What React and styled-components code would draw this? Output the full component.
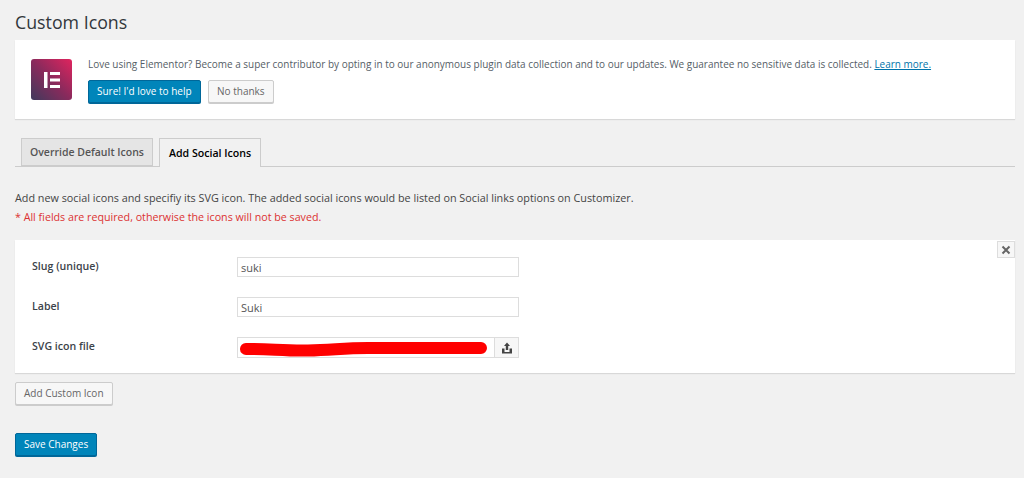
import styled, { createGlobalStyle } from "styled-components"

const Global = createGlobalStyle`
  html, body {
    margin: 0;
    background: #f1f1f1;
  }
  body {
    font-family: "Open Sans", "Noto Sans", sans-serif;
    font-size: 11.5px;
    color: #444;
  }
  * { box-sizing: border-box; }
`

const Wrap = styled.div`
  width: 1024px;
  height: 478px;
  padding: 12px 9px 0 15px;
  overflow: hidden;
`

const Title = styled.h1`
  margin: 0;
  height: 28px;
  font-size: 17.8px;
  line-height: 20px;
  font-weight: 400;
  color: #32373c;
`

const Notice = styled.div`
  display: flex;
  gap: 16px;
  height: 79px;
  padding: 16px 16px 0;
  background: #fff;
  box-shadow: 0 1px 1px rgba(0, 0, 0, 0.1);
`

const Logo = styled.div`
  flex: none;
  width: 41px;
  height: 41px;
  margin-top: 3px;
  border-radius: 3px;
  background: linear-gradient(45deg, #3f3a5c 0%, #8a2a5c 50%, #e0245e 100%);
  display: flex;
  align-items: center;
  justify-content: center;
  svg { display: block; }
`

const NoticeBody = styled.div`
  display: flex;
  flex-direction: column;
  gap: 7px;
`

const NoticeText = styled.p`
  margin: 0;
  height: 17px;
  line-height: 17px;
  font-size: 9.97px;
  color: #555d66;
  white-space: nowrap;

  a { color: #0073aa; text-decoration: underline; }
`

const Actions = styled.div`
  display: flex;
  gap: 7px;
`

const Button = styled.button`
  height: 23px;
  padding: 0 ${p => p.$pad || 8}px 1px;
  border-radius: 2px;
  font-family: inherit;
  font-size: 10px;
  white-space: nowrap;
  border: 1px solid ${p => (p.$primary ? "#006799" : "#ccc")};
  background: ${p => (p.$primary ? "#0085ba" : "#f7f7f7")};
  color: ${p => (p.$primary ? "#fff" : "#666")};
  box-shadow: 0 1px 0 ${p => (p.$primary ? "#006799" : "#ccc")};
`

const Tabs = styled.div`
  display: flex;
  gap: 6px;
  height: 29px;
  margin-top: 19px;
  padding-left: 6px;
  border-bottom: 1px solid #ccc;
`

const Tab = styled.div`
  height: ${p => (p.$active ? 29 : 28)}px;
  padding: 0 ${p => (p.$active ? 9 : 8)}px;
  display: flex;
  align-items: center;
  font-size: ${p => (p.$active ? 10.6 : 10.5)}px;
  font-weight: 600;
  white-space: nowrap;
  border: 1px solid #ccc;
  border-bottom: ${p => (p.$active ? "none" : "1px solid #ccc")};
  background: ${p => (p.$active ? "#f1f1f1" : "#e5e5e5")};
  color: ${p => (p.$active ? "#000" : "#555")};
`

const Intro = styled.p`
  margin: 22px 0 0;
  height: 20px;
  line-height: 17px;
  font-size: 10.8px;
  color: #444;
`

const Required = styled.p`
  margin: 0;
  height: 31px;
  line-height: 17px;
  font-size: 10.7px;
  color: #dc3232;
`

const Card = styled.div`
  position: relative;
  height: 133px;
  padding: 17px;
  background: #fff;
  box-shadow: 0 1px 1px rgba(0, 0, 0, 0.1);
  display: flex;
  flex-direction: column;
  gap: 20px;
`

const Close = styled.button`
  position: absolute;
  top: 1px;
  right: 0;
  width: 18px;
  height: 17px;
  padding: 0;
  display: flex;
  align-items: center;
  justify-content: center;
  background: #f7f7f7;
  border: 1px solid #ddd;
`

const Row = styled.div`
  display: flex;
  height: 20px;
`

const Label = styled.label`
  width: 205px;
  flex: none;
  font-size: 10.6px;
  font-weight: 600;
  line-height: 18px;
  color: #3c434a;
`

const Input = styled.div`
  width: 282px;
  height: ${p => (p.$tall ? 21 : 20)}px;
  padding-left: 3px;
  display: flex;
  align-items: center;
  font-size: 11px;
  color: #555;
  background: #fff;
  border: 1px solid #ddd;
`

const FileInput = styled(Input)`
  padding: 0;
`

const Scribble = styled.svg`
  flex: none;
  display: block;
  width: 256px;
  height: 19px;
`

const Upload = styled.div`
  margin-left: auto;
  width: 25px;
  height: 100%;
  display: flex;
  align-items: center;
  justify-content: center;
  background: #f7f7f7;
  border-left: 1px solid #ddd;
`

const AddRow = styled.div`
  margin-top: 9px;
  height: 51px;
`

const Elementor = () => (
  <svg width="18" height="18" viewBox="0 0 18 18">
    <rect x="1" y="1" width="3.5" height="16" fill="#fff" />
    <rect x="7" y="1" width="10" height="3" fill="#fff" />
    <rect x="7" y="7.5" width="10" height="3" fill="#fff" />
    <rect x="7" y="14" width="10" height="3" fill="#fff" />
  </svg>
)

const App = () => {
  return (
    <Wrap>
      <Global />
      <Title>Custom Icons</Title>

      <Notice>
        <Logo><Elementor /></Logo>
        <NoticeBody>
          <NoticeText>
            Love using Elementor? Become a super contributor by opting in to our anonymous plugin data collection and to our updates. We guarantee no sensitive data is collected. <a href="#more">Learn more.</a>
          </NoticeText>
          <Actions>
            <Button $primary>Sure! I'd love to help</Button>
            <Button $pad={8.5}>No thanks</Button>
          </Actions>
        </NoticeBody>
      </Notice>

      <Tabs>
        <Tab>Override Default Icons</Tab>
        <Tab $active>Add Social Icons</Tab>
      </Tabs>

      <Intro>Add new social icons and specifiy its SVG icon. The added social icons would be listed on Social links options on Customizer.</Intro>
      <Required>* All fields are required, otherwise the icons will not be saved.</Required>

      <Card>
        <Close aria-label="Remove">
          <svg width="10" height="10" viewBox="0 0 10 10">
            <path d="M1.5 1.5l7 7M8.5 1.5l-7 7" stroke="#666" strokeWidth="2" fill="none" />
          </svg>
        </Close>
        <Row>
          <Label>Slug (unique)</Label>
          <Input>suki</Input>
        </Row>
        <Row>
          <Label>Label</Label>
          <Input>Suki</Input>
        </Row>
        <Row>
          <Label>SVG icon file</Label>
          <FileInput $tall>
            <Scribble viewBox="0 0 256 19">
              <path d="M8 11C30 10.5 45 13 70 12.5C95 12 105 10 130 10L243 10" stroke="#f00" strokeWidth="12" strokeLinecap="round" fill="none" />
            </Scribble>
            <Upload>
              <svg width="12" height="12" viewBox="0 0 12 12">
                <path d="M6 0.5L9 4H7.2V8H4.8V4H3Z" fill="#444" />
                <path d="M1 6.5H3.5V10H8.5V6.5H11V11.5H1Z" fill="#444" />
              </svg>
            </Upload>
          </FileInput>
        </Row>
      </Card>

      <AddRow>
        <Button>Add Custom Icon</Button>
      </AddRow>
      <Button $primary>Save Changes</Button>
    </Wrap>
  )
}

export default App
